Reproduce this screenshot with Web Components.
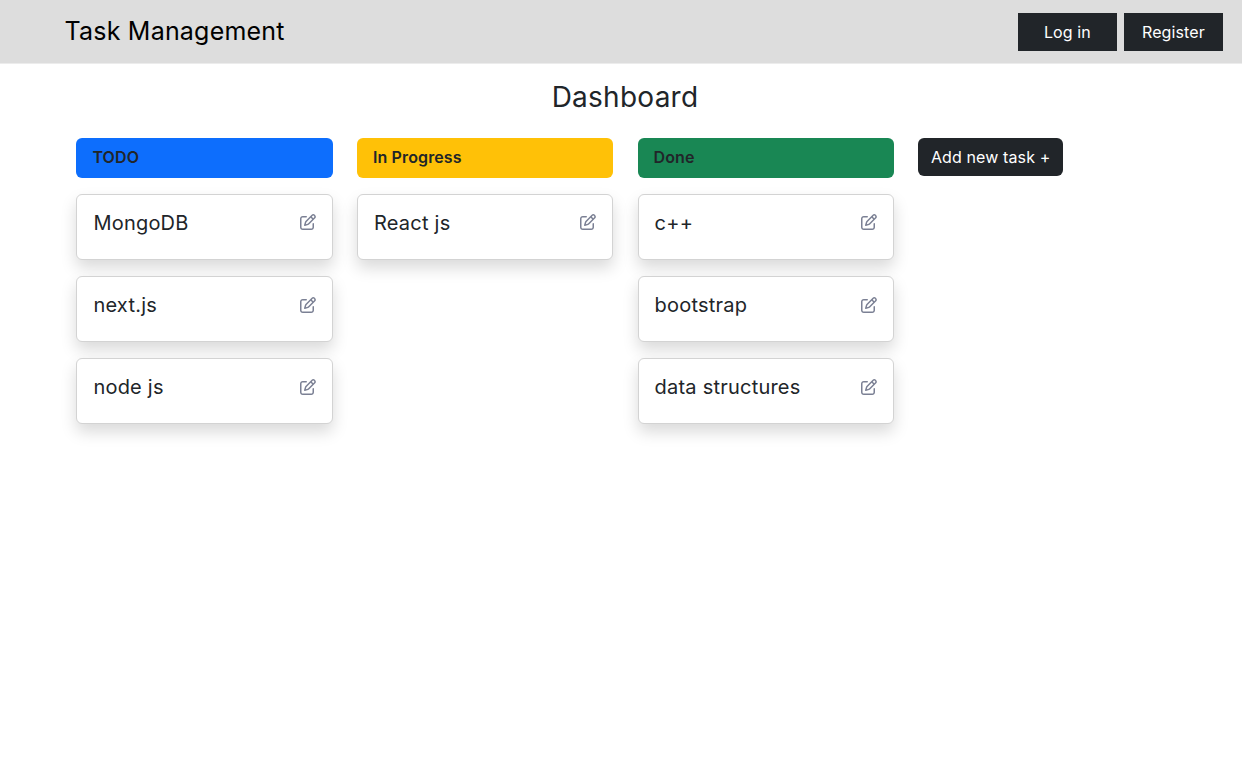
<!DOCTYPE html>
<html lang="en">
<head>
<meta charset="utf-8">
<title>Task Management</title>
<style>
body{margin:0;background:#fff;color:#212529;font:16px/24px Inter,"Liberation Sans",sans-serif}
</style>
</head>
<body>
<task-app></task-app>
<script>
function define(name, html, setup) {
  customElements.define(name, class extends HTMLElement {
    constructor() {
      super();
      this.attachShadow({mode: "open"}).innerHTML = html;
    }
    connectedCallback() { if (setup) setup(this, this.shadowRoot); }
  });
}

define("dark-button", `
<style>
:host{display:block}
button{display:block;width:100%;box-sizing:border-box;margin:0;padding:7px 12px;border:0;background:#212529;color:#fff;font:inherit;line-height:24px;letter-spacing:.12px;white-space:nowrap;border-radius:var(--radius,0);height:var(--height,38px)}
</style>
<button><slot></slot></button>`);

define("app-header", `
<style>
:host{display:flex;box-sizing:border-box;height:64px;border-bottom:1px solid #ececec;padding:12.6px 19.3px 0 64.5px;background:#ddd;justify-content:space-between;align-items:flex-start}
.brand{font-size:25px;line-height:36px;color:#000;letter-spacing:.21px}
nav{display:flex;gap:7.5px}
dark-button{width:98.5px;--height:38.3px}
</style>
<div class="brand">Task Management</div>
<nav><dark-button>Log in</dark-button><dark-button>Register</dark-button></nav>`);

define("edit-icon", `
<style>:host{display:block;width:16px;height:16px;color:#7b8094}svg{display:block;overflow:visible}</style>
<svg width="16" height="16" viewBox="0 0 512 512" fill="currentColor"><path d="M441 58.9L453.1 71c9.4 9.4 9.4 24.6 0 33.9L424 134.1 377.9 88 407 58.9c9.4-9.4 24.6-9.4 33.9 0zM209.8 256.2L344 121.9 390.1 168 255.8 302.2c-2.9 2.9-6.5 5-10.4 6.1l-58.5 16.7 16.7-58.5c1.1-3.9 3.2-7.5 6.1-10.4zM373.1 25L175.8 222.2c-8.7 8.7-15 19.4-18.3 31.1l-28.6 100c-2.4 8.4-.1 17.4 6.1 23.6s15.2 8.5 23.6 6.1l100-28.6c11.8-3.4 22.5-9.7 31.1-18.3L487 138.9c28.1-28.1 28.1-73.7 0-101.8L474.9 25C446.8-3.1 401.2-3.1 373.1 25zM88 64C39.4 64 0 103.4 0 152V424c0 48.6 39.4 88 88 88H360c48.6 0 88-39.4 88-88V312c0-13.3-10.7-24-24-24s-24 10.7-24 24V424c0 22.1-17.9 40-40 40H88c-22.1 0-40-17.9-40-40V152c0-22.1 17.9-40 40-40H200c13.3 0 24-10.7 24-24s-10.7-24-24-24H88z"/></svg>`);

define("task-card", `
<style>
:host{display:flex;box-sizing:border-box;height:66px;padding:16px 16px 0;border:1px solid #d3d3d3;border-radius:6px;background:#fff;box-shadow:0 8px 16px rgba(0,0,0,.15);justify-content:space-between;align-items:flex-start}
.name{font-size:20px;line-height:24px;letter-spacing:.22px}
edit-icon{margin-top:3px}
:host(:not(:first-child)) edit-icon{margin-top:4px}
</style>
<span class="name"><slot></slot></span><edit-icon></edit-icon>`);

define("task-column", `
<style>
:host{display:flex;flex-direction:column;gap:16px}
header{box-sizing:border-box;height:40px;padding:7px 16px;border-radius:6px;background:var(--tone);font-weight:600;line-height:24px;letter-spacing:.12px}
.cards{display:flex;flex-direction:column;gap:16px}
</style>
<header></header><div class="cards"><slot></slot></div>`,
(el, root) => {
  root.querySelector("header").textContent = el.getAttribute("label");
});

define("task-app", `
<style>
:host{display:block;min-height:100vh}
h1{margin:16px 0 0;padding-left:8px;font-size:28px;line-height:34px;font-weight:400;text-align:center;letter-spacing:.25px}
main{display:grid;grid-template-columns:repeat(3,256.5px) 145px;column-gap:24.1px;align-items:start;padding:24px 0 0 76.4px}
dark-button{--radius:6px;--height:37.5px}
</style>
<app-header></app-header>
<h1>Dashboard</h1>
<main>
<task-column label="TODO" style="--tone:#0d6efd"><task-card>MongoDB</task-card><task-card>next.js</task-card><task-card>node js</task-card></task-column>
<task-column label="In Progress" style="--tone:#ffc107"><task-card>React js</task-card></task-column>
<task-column label="Done" style="--tone:#198754"><task-card>c++</task-card><task-card>bootstrap</task-card><task-card>data structures</task-card></task-column>
<dark-button>Add new task +</dark-button>
</main>`);
</script>
</body>
</html>
